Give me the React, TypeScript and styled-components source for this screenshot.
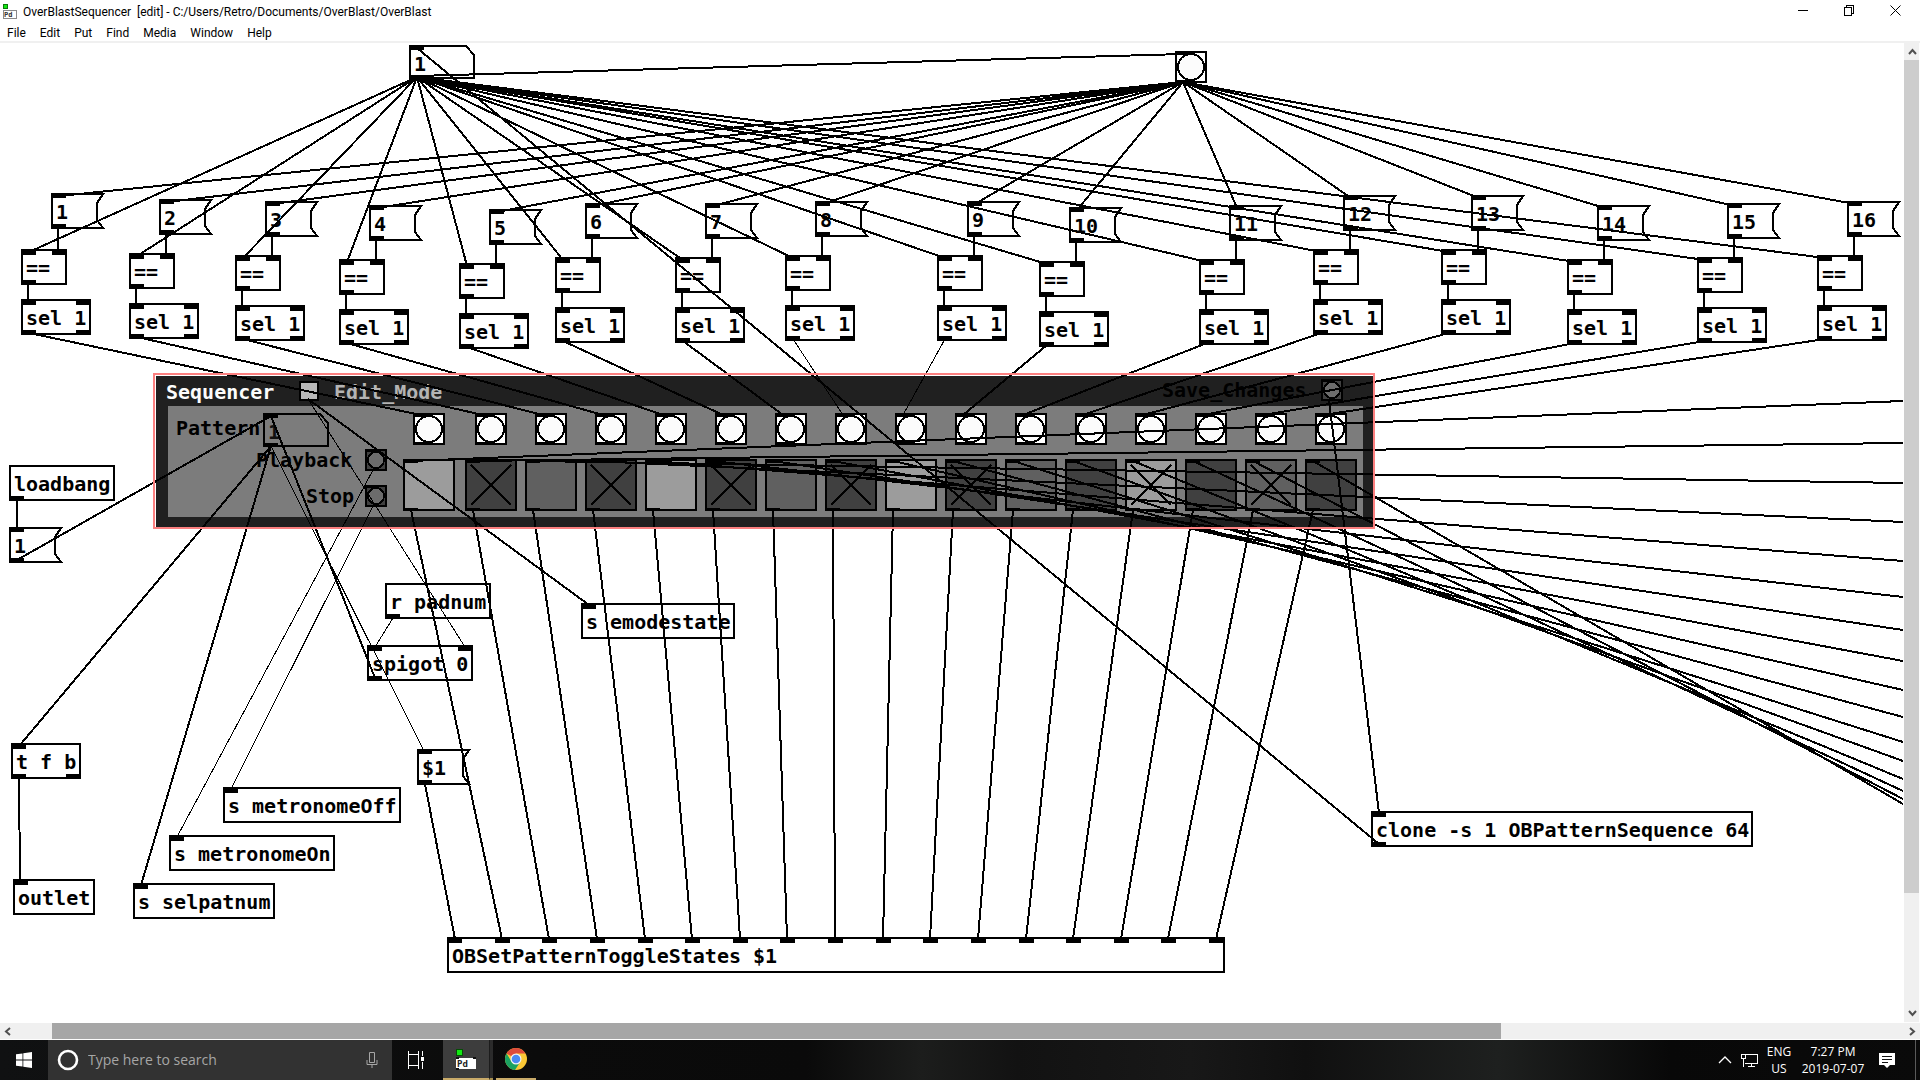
import React from "react";
import styled, { createGlobalStyle } from "styled-components";

const GlobalStyle = createGlobalStyle`
  *, *::before, *::after { box-sizing: border-box; }
  html, body { margin: 0; padding: 0; background: #fff; }
  button, input { margin: 0; padding: 0; border: 0; border-radius: 0; font: inherit; color: inherit; background: none; }
  svg { display: block; }
`;

const UI_FONT = `"Open Sans", "Noto Sans", sans-serif`;
const CHROME_FONT = `Roboto, "Open Sans", sans-serif`;
const PATCH_FONT = `"DejaVu Sans Mono", monospace`;

/* ---------- window frame ---------- */

const Screen = styled.div`
  display: flex;
  flex-direction: column;
  height: 100vh;
  overflow: hidden;
  font-family: ${UI_FONT};
  color: #000;
`;

const TitleBar = styled.header`
  display: flex;
  align-items: center;
  flex: none;
  height: 24px;
  padding: 0 2px 0 3px;
  font-family: ${CHROME_FONT};
`;

const Title = styled.h1`
  flex: 1;
  margin: 0;
  padding-left: 5px;
  font-size: 12px;
  font-weight: 400;
  line-height: 20px;
  white-space: nowrap;
`;

const WindowButton = styled.button`
  display: flex;
  align-items: center;
  align-self: flex-start;
  justify-content: center;
  width: 46px;
  height: 21px;
`;

const MenuBar = styled.nav`
  display: flex;
  flex: none;
  height: 19px;
  border-bottom: 2px solid #f0f0f0;
  font-family: ${CHROME_FONT};
`;

const MenuButton = styled.button`
  padding: 1px 7px 0;
  font-size: 12px;
  line-height: 16px;
`;

const Workspace = styled.main`
  display: grid;
  flex: 1;
  min-height: 0;
  grid-template-columns: minmax(0, 1fr) 16px;
  grid-template-rows: minmax(0, 1fr) 17px;
`;

const Viewport = styled.section`
  position: relative;
  overflow: hidden;
  background: #fff;
`;

const Patch = styled.div`
  position: absolute;
  top: -43px;
  left: 0;
  width: 1903px;
  height: 1024px;
  font-family: ${PATCH_FONT};
  font-size: 20px;
  font-weight: 700;
`;

const ScrollBar = styled.div<{ $vertical?: boolean }>`
  display: flex;
  flex-direction: ${(p) => (p.$vertical ? "column" : "row")};
  grid-column: ${(p) => (p.$vertical ? "auto" : "1 / -1")};
  background: #f0f0f0;
  border: 0 solid #fdfdfd;
  border-width: ${(p) => (p.$vertical ? "0 1px 1px 0" : "0 0 1px 0")};
`;

const ScrollArrow = styled.button`
  display: flex;
  flex: none;
  align-items: center;
  justify-content: center;
  width: 17px;
  height: 17px;
`;

const ScrollTrack = styled.div<{ $vertical?: boolean }>`
  display: flex;
  flex: 1;
  flex-direction: ${(p) => (p.$vertical ? "column" : "row")};
`;

const ScrollSpace = styled.div<{ $grow: number }>`
  flex: ${(p) => p.$grow} 1 0;
`;

const ScrollThumb = styled(ScrollSpace)<{ $color: string }>`
  background: ${(p) => p.$color};
`;

/* ---------- patch objects ---------- */

type Place = { $x: number; $y: number; $w: number };

const ObjectBox = styled.div<Place>`
  position: absolute;
  left: ${(p) => p.$x}px;
  top: ${(p) => p.$y}px;
  width: ${(p) => p.$w}px;
  height: 36px;
  padding: 1px 0 0 3px;
  border: 2px solid #000;
  background: #fff;
  line-height: 32px;
  white-space: nowrap;
`;

const MessageButton = styled.button<Place>`
  position: absolute;
  z-index: 0;
  left: ${(p) => p.$x}px;
  top: ${(p) => p.$y}px;
  width: ${(p) => p.$w}px;
  height: 36px;
  padding: 1px 0 0 5px;
  line-height: 34px;
  text-align: left;
`;

const Outline = styled.svg`
  position: absolute;
  inset: 0;
  z-index: -1;
`;

const NumberField = styled.div<Place & { $color: string }>`
  position: absolute;
  z-index: 0;
  left: ${(p) => p.$x}px;
  top: ${(p) => p.$y}px;
  width: ${(p) => p.$w}px;
  height: 34px;
  color: ${(p) => p.$color};
`;

const NumberInput = styled.input`
  width: 56px;
  height: 34px;
  padding: 3px 0 0 5px;
  outline: none;
`;

const Panel = styled.section`
  position: absolute;
  left: 156px;
  top: 376px;
  width: 1217px;
  height: 151px;
  border: solid #202020;
  border-width: 30px 10px 10px 12px;
  background: #7c7c7c;
`;

const PanelFrame = styled.div`
  position: absolute;
  left: 153px;
  top: 373px;
  width: 1222px;
  height: 156px;
  border: 2px solid #fc8080;
  pointer-events: none;
`;

const PanelText = styled.span<{ $x: number; $y: number; $color: string }>`
  position: absolute;
  left: ${(p) => p.$x}px;
  top: ${(p) => p.$y}px;
  line-height: 24px;
  color: ${(p) => p.$color};
`;

const BangButton = styled.button<{ $x: number; $y: number; $size: number; $bg: string }>`
  position: absolute;
  left: ${(p) => p.$x}px;
  top: ${(p) => p.$y}px;
  width: ${(p) => p.$size}px;
  height: ${(p) => p.$size}px;
  border: 2px solid #000;
  background: ${(p) => p.$bg};
`;

const ToggleBox = styled.span<{ $x: number; $y: number; $size: number; $bg: string }>`
  position: absolute;
  left: ${(p) => p.$x}px;
  top: ${(p) => p.$y}px;
  width: ${(p) => p.$size}px;
  height: ${(p) => p.$size}px;
  border: 2px solid #000;
  background: ${(p) => p.$bg};
`;

const ToggleInput = styled.input`
  position: absolute;
  inset: 0;
  width: 100%;
  height: 100%;
  appearance: none;
`;

const Cords = styled.svg`
  position: absolute;
  inset: 0;
  width: 100%;
  height: 100%;
  pointer-events: none;
`;

/* ---------- patch data ---------- */

const columns: [number, number][] = [
  [21, 249], [129, 253], [235, 255], [339, 259],
  [459, 263], [555, 257], [675, 257], [785, 255],
  [937, 255], [1039, 261], [1199, 259], [1313, 249],
  [1441, 249], [1567, 259], [1697, 257], [1817, 255],
];
const messageTops = [193, 199, 201, 205, 209, 203, 203, 201, 201, 207, 205, 195, 195, 205, 203, 201];

const stepColors = ["#9c9c9c", "#404040", "#606060", "#404040"];
const stepsOn = [2, 4, 6, 8, 10, 13, 15];
const bangX = (n: number) => (n === 0 ? 413 : 415 + 60 * n);
const toggleX = (n: number) => bangX(n) - 10;
const toggleColor = (n: number) => stepColors[n % 4];

const offscreenEnds = [401, 443, 483, 522, 561, 597, 630, 661, 690, 717, 742, 761, 779, 791, 799, 804];

type BoxSpec = { text: string; x: number; y: number; ins?: number[]; outs?: number[]; w?: number };
const stateInlets = Array.from({ length: 17 }, (_, i) => Math.round((i * 762) / 16));

const boxes: BoxSpec[] = [
  { text: "loadbang", x: 9, y: 465, outs: [0] },
  { text: "r padnum", x: 385, y: 583, outs: [0] },
  { text: "spigot 0", x: 367, y: 645, ins: [0, 91], outs: [0] },
  { text: "s emodestate", x: 581, y: 603, ins: [0] },
  { text: "t f b", x: 11, y: 743, ins: [0], outs: [0, 55] },
  { text: "outlet", x: 13, y: 879, ins: [0] },
  { text: "s metronomeOff", x: 223, y: 787, ins: [0] },
  { text: "s metronomeOn", x: 169, y: 835, ins: [0] },
  { text: "s selpatnum", x: 133, y: 883, ins: [0] },
  { text: "clone -s 1 OBPatternSequence 64", x: 1371, y: 811, ins: [0], outs: [0] },
  { text: "OBSetPatternToggleStates $1", x: 447, y: 937, ins: stateInlets, w: 778 },
];
columns.forEach(([x, y]) => {
  boxes.push({ text: "==", x, y, ins: [0, 31], outs: [0], w: 46 });
  boxes.push({ text: "sel 1", x, y: y + 50, ins: [0, 55], outs: [0, 55] });
});

const messages = [
  ...columns.map(([x], i) => ({ text: String(i + 1), x: x + 30, y: messageTops[i] })),
  { text: "1", x: 9, y: 527 },
  { text: "$1", x: 417, y: 749 },
];

/* x1, y1, x2, y2, stroke width */
type Cord = [number, number, number, number, number?];
const cords: Cord[] = [
  [417, 76, 1183, 54],
  [1379, 844, 417, 48],
  [17, 500, 17, 528],
  [17, 560, 271, 416],
  [375, 678, 271, 416],
  [271, 446, 20, 745],
  [271, 446, 141, 885],
  [271, 446, 424, 751, 1],
  [308, 399, 589, 605],
  [308, 399, 465, 647, 1],
  [373, 470, 177, 837, 1],
  [373, 506, 231, 789, 1],
  [393, 618, 375, 647, 1],
  [19, 778, 20, 881],
  [425, 784, 455, 939],
  [1329, 400, 1379, 813],
];
columns.forEach(([x, y], i) => {
  const steep = i === 7 || i === 8;
  cords.push([417, 77, x + 8, y + 3]);
  cords.push([1183, 82, x + 38, messageTops[i] + 3]);
  cords.push([x + 37, messageTops[i] + 35, x + 37, y + 2]);
  cords.push([x + 7, y + 35, x + 7, y + 52]);
  cords.push([x + 8, y + 84, bangX(i) + 8, 415, steep ? 1 : 2]);
  cords.push([toggleX(i) + 8, 461, 1903, offscreenEnds[i]]);
  cords.push([toggleX(i) + 8, 510, 447 + stateInlets[i + 1] + 7, 939]);
});

/* ---------- patch parts ---------- */

function PatchBox({ text, x, y, w }: BoxSpec) {
  return (
    <ObjectBox $x={x} $y={y} $w={w ?? text.length * 12 + 10}>
      {text}
    </ObjectBox>
  );
}

function Message({ text, x, y }: { text: string; x: number; y: number }) {
  return (
    <MessageButton $x={x} $y={y} $w={54}>
      <Outline width="54" height="36" shapeRendering="crispEdges">
        <path d="M1 1H52L46 10V27L52 35H1Z" fill="#fff" stroke="#000" strokeWidth="2" />
        <path d="M0 0H15V5H0ZM0 31H15V36H0Z" />
      </Outline>
      {text}
    </MessageButton>
  );
}

function NumberBox({ x, y, label, fill, color }: { x: number; y: number; label: string; fill: string; color: string }) {
  return (
    <NumberField $x={x} $y={y} $w={66} $color={color}>
      <Outline width="66" height="34" shapeRendering="crispEdges">
        <path d="M1 1H57L65 10V33H1Z" fill={fill} stroke="#000" strokeWidth="2" />
        <path d="M0 0H15V5H0ZM0 30H15V34H0Z" fill="#000" />
      </Outline>
      <NumberInput aria-label={label} defaultValue="1" />
    </NumberField>
  );
}

function Bang({ x, y, size, bg, fill, label }: { x: number; y: number; size: number; bg: string; fill: string; label: string }) {
  const inner = size - 4;
  return (
    <BangButton $x={x} $y={y} $size={size} $bg={bg} aria-label={label}>
      <svg width={inner} height={inner} shapeRendering="crispEdges">
        <circle cx={inner / 2} cy={inner / 2} r={inner / 2 - 1} fill={fill} stroke="#000" strokeWidth="2" />
        <path d={size > 30 ? `M0 0H13V2H0ZM0 ${inner - 1}H13V${inner}H0Z` : `M0 0H9V1H0Z`} />
      </svg>
    </BangButton>
  );
}

function Toggle({ x, y, size, bg, on, label }: { x: number; y: number; size: number; bg: string; on?: boolean; label: string }) {
  const inner = size - 4;
  return (
    <ToggleBox $x={x} $y={y} $size={size} $bg={bg}>
      <ToggleInput type="checkbox" aria-label={label} defaultChecked={on} />
      {size > 30 && (
        <svg width={inner} height={inner} shapeRendering="crispEdges">
          <path d={`M0 0H13V2H0ZM0 ${inner - 1}H13V${inner}H0Z`} />
          {on && <path d={`M4 4L${inner - 4} ${inner - 4}M${inner - 4} 4L4 ${inner - 4}`} stroke="#000" strokeWidth="2" />}
        </svg>
      )}
    </ToggleBox>
  );
}

function SequencerPatch() {
  return (
    <Patch>
      {boxes.map((b, i) => (
        <PatchBox key={i} {...b} />
      ))}
      {messages.map((m, i) => (
        <Message key={i} {...m} />
      ))}
      <NumberBox x={409} y={45} label="Selected pattern" fill="#fff" color="#000" />
      <Bang x={1175} y={51} size={32} bg="#fff" fill="#fcfcfc" label="Refresh" />

      <Panel aria-label="Sequencer" />
      <PanelText $x={166} $y={380} $color="#fcfcfc">Sequencer</PanelText>
      <PanelText $x={334} $y={380} $color="#b4b4b4">Edit_Mode</PanelText>
      <PanelText $x={176} $y={416} $color="#000">Pattern</PanelText>
      <PanelText $x={256} $y={448} $color="#000">Playback</PanelText>
      <PanelText $x={306} $y={484} $color="#000">Stop</PanelText>
      <PanelText $x={1162} $y={378} $color="#000">Save_Changes</PanelText>
      <Toggle x={299} y={381} size={20} bg="#b8b8b8" label="Edit mode" />
      <NumberBox x={263} y={413} label="Pattern" fill="#7c7c7c" color="#101010" />
      <Bang x={365} y={449} size={22} bg="#404040" fill="#6c6c6c" label="Playback" />
      <Bang x={365} y={485} size={22} bg="#404040" fill="#6c6c6c" label="Stop" />
      <Bang x={1321} y={379} size={22} bg="#404040" fill="#6c6c6c" label="Save changes" />
      {columns.map((_, i) => (
        <React.Fragment key={i}>
          <Bang x={bangX(i)} y={413} size={32} bg="#fff" fill="#fcfcfc" label={`Step ${i + 1} bang`} />
          <Toggle x={toggleX(i)} y={459} size={52} bg={toggleColor(i)} on={stepsOn.includes(i + 1)} label={`Step ${i + 1}`} />
        </React.Fragment>
      ))}

      <Cords shapeRendering="crispEdges">
        {boxes.map((b) => [
          ...(b.ins ?? []).map((dx) => <rect key={`i${b.x}-${b.y}-${dx}`} x={b.x + dx} y={b.y} width="15" height="6" />),
          ...(b.outs ?? []).map((dx) => <rect key={`o${b.x}-${b.y}-${dx}`} x={b.x + dx} y={b.y + 31} width="15" height="5" />),
        ])}
        {cords.map(([x1, y1, x2, y2, w = 2], i) => (
          <line key={i} x1={x1} y1={y1} x2={x2} y2={y2} stroke="#000" strokeWidth={w} />
        ))}
      </Cords>
      <PanelFrame />
    </Patch>
  );
}

/* ---------- taskbar ---------- */

const TaskBar = styled.footer`
  display: flex;
  flex: none;
  height: 40px;
  background: linear-gradient(90deg, #101112 0, #0b0b0b 28%, #0a0a0a 42%, #1c1d1c 48%, #121212 53%, #181818 62%, #101010 68%, #1e201f 78%, #080808 87%, #0a0a0a 100%);
  color: #fff;
`;

const TaskButton = styled.button<{ $w: number; $active?: boolean; $line?: boolean }>`
  display: flex;
  align-items: center;
  justify-content: center;
  width: ${(p) => p.$w}px;
  height: 40px;
  background: ${(p) => (p.$active ? "#3d3d3d" : "transparent")};
  border-bottom: ${(p) => (p.$line ? "2px solid #c9ab69" : "0")};
`;

const AppSlot = styled.div`
  display: flex;
  padding: 0 3px;
`;

const Divider = styled.span`
  width: 3px;
`;

const ButtonEdge = styled.span`
  width: 4px;
  background: #2b2b2b;
  border-left: 1px solid #1c1c1c;
  border-bottom: 2px solid #a8904f;
`;

const SearchBox = styled.label`
  display: flex;
  align-items: center;
  width: 344px;
  padding: 0 14px 0 9px;
  background: #323232;
`;

const SearchInput = styled.input`
  flex: 1;
  min-width: 0;
  padding-left: 9px;
  outline: none;
  font-size: 14px;
  line-height: 20px;
  &::placeholder { color: #a6a6a6; opacity: 1; }
`;

const Spacer = styled.div`
  flex: 1;
`;

const TrayButton = styled.button<{ $w: number }>`
  display: flex;
  flex-direction: column;
  align-items: center;
  justify-content: center;
  width: ${(p) => p.$w}px;
  font-size: 12px;
  line-height: 17px;
  white-space: nowrap;
`;

const DesktopEdge = styled.button`
  width: 5px;
  margin-left: 10px;
  border-left: 1px solid #5a5a5a;
`;

function PdIcon() {
  return (
    <svg width="20" height="22" viewBox="0 0 20 22" shapeRendering="crispEdges">
      <rect x="0" y="1" width="7" height="7" fill="#064d06" />
      <rect x="1" y="2" width="5" height="5" fill="#12e812" />
      <rect x="0" y="10" width="20" height="11" fill="#fff" />
      <path d="M0 9H3V11H0ZM17 9H20V11H17ZM0 20H3V22H0Z" fill="#111" />
      <text x="1" y="19" fontFamily="DejaVu Sans Mono" fontSize="9" fontWeight="700" fill="#222">Pd</text>
    </svg>
  );
}

function ChromeIcon() {
  return (
    <svg width="24" height="24" viewBox="0 0 24 24">
      <circle cx="12" cy="12" r="11" fill="#fbc835" />
      <path d="M12 12L2.5 6.5A11 11 0 0 1 21.5 6.5H12Z" fill="#de4b3b" />
      <path d="M2.5 6.5A11 11 0 0 0 11 23L16.5 14.5L12 12L7.5 14.5Z" fill="#1aa261" />
      <circle cx="12" cy="12" r="5.5" fill="#f4f4f4" />
      <circle cx="12" cy="12" r="4.3" fill="#4a8af4" />
    </svg>
  );
}

function Taskbar() {
  return (
    <TaskBar>
      <TaskButton $w={48} aria-label="Start">
        <svg width="16" height="16" viewBox="0 0 16 16" fill="#fff">
          <path d="M0 2.3L6.5 1.4V7.6H0ZM7.3 1.3L16 0V7.6H7.3ZM0 8.4H6.5V14.6L0 13.7ZM7.3 8.4H16V16L7.3 14.7Z" />
        </svg>
      </TaskButton>
      <SearchBox>
        <svg width="22" height="22" viewBox="0 0 22 22">
          <circle cx="11" cy="11" r="9" fill="none" stroke="#fff" strokeWidth="2.6" />
        </svg>
        <SearchInput aria-label="Search" placeholder="Type here to search" />
        <svg width="12" height="18" viewBox="0 0 12 18" fill="none" stroke="#a6a6a6">
          <path d="M3.5 1.5H8.5V11.5H3.5ZM1 9V13.5H11V9M6 13.5V17" />
        </svg>
      </SearchBox>
      <TaskButton $w={48} aria-label="Task view">
        <svg width="18" height="18" viewBox="0 0 18 18" fill="none" stroke="#fff" shapeRendering="crispEdges">
          <path d="M1.5 0V3.5H11.5V0M1.5 18V14.5H11.5V18M1.5 3.5V14.5M11.5 3.5V14.5M15.5 0V5M15.5 11V18" />
          <rect x="14" y="6" width="3" height="4" fill="#fff" stroke="none" />
        </svg>
      </TaskButton>
      <Divider />
      <TaskButton $w={46} $active $line aria-label="Pd">
        <PdIcon />
      </TaskButton>
      <ButtonEdge />
      <AppSlot>
        <TaskButton $w={40} $line aria-label="Chrome">
          <ChromeIcon />
        </TaskButton>
      </AppSlot>
      <Spacer />
      <TrayButton $w={24} aria-label="Show hidden icons">
        <svg width="14" height="8" viewBox="0 0 14 8" fill="none" stroke="#fff" strokeWidth="1.3">
          <path d="M1 7L7 1L13 7" />
        </svg>
      </TrayButton>
      <TrayButton $w={24} aria-label="Network">
        <svg width="17" height="15" viewBox="0 0 17 15" fill="none" stroke="#fff" shapeRendering="crispEdges">
          <path d="M5 1.5H16.5V10.5H4M10.5 10.5V13M7 13.5H14M0.5 1.5H4.5V5.5H0.5ZM2.5 5.5V14" />
        </svg>
      </TrayButton>
      <TrayButton $w={36}>
        <span>ENG</span>
        <span>US</span>
      </TrayButton>
      <TrayButton $w={72}>
        <span>7:27 PM</span>
        <span>2019-07-07</span>
      </TrayButton>
      <TrayButton $w={36} aria-label="Notifications">
        <svg width="16" height="17" viewBox="0 0 16 17">
          <path d="M0 1H16V13H11L8 16L5 13H0Z" fill="#fff" />
          <path d="M3 4.5H13M3 7.5H13M3 10.5H9" stroke="#111" />
        </svg>
      </TrayButton>
      <DesktopEdge aria-label="Show desktop" />
    </TaskBar>
  );
}

/* ---------- scroll bars ---------- */

function Chevron({ d }: { d: string }) {
  return (
    <svg width="9" height="9" viewBox="0 0 9 9" fill="none" stroke="#505050" strokeWidth="2">
      <path d={d} />
    </svg>
  );
}

export default function App() {
  return (
    <Screen>
      <GlobalStyle />
      <TitleBar>
        <svg width="15" height="18" viewBox="0 0 15 18" shapeRendering="crispEdges">
          <rect x="0" y="1" width="5" height="5" fill="#0a7a0a" />
          <rect x="1" y="2" width="3" height="3" fill="#12e812" />
          <rect x="0.5" y="7.5" width="13" height="8" fill="#fff" stroke="#8a8a8a" />
          <text x="1" y="14" fontFamily="DejaVu Sans Mono" fontSize="7" fontWeight="700" fill="#333">Pd</text>
        </svg>
        <Title>{"OverBlastSequencer \u00a0[edit] - C:/Users/Retro/Documents/OverBlast/OverBlast"}</Title>
        <WindowButton aria-label="Minimize">
          <svg width="11" height="11" stroke="#000" shapeRendering="crispEdges"><path d="M0 5.5H10" /></svg>
        </WindowButton>
        <WindowButton aria-label="Restore">
          <svg width="11" height="11" fill="none" stroke="#000" shapeRendering="crispEdges">
            <path d="M0.5 2.5H7.5V10.5H0.5ZM2.5 2V0.5H9.5V8.5H8" />
          </svg>
        </WindowButton>
        <WindowButton aria-label="Close">
          <svg width="11" height="11" stroke="#000"><path d="M0.5 0.5L10.5 10.5M10.5 0.5L0.5 10.5" /></svg>
        </WindowButton>
      </TitleBar>
      <MenuBar>
        {["File", "Edit", "Put", "Find", "Media", "Window", "Help"].map((m) => (
          <MenuButton key={m}>{m}</MenuButton>
        ))}
      </MenuBar>
      <Workspace>
        <Viewport>
          <SequencerPatch />
        </Viewport>
        <ScrollBar $vertical>
          <ScrollArrow aria-label="Scroll up"><Chevron d="M1 7L4.5 3L8 7" /></ScrollArrow>
          <ScrollTrack $vertical>
            <ScrollThumb $grow={834} $color="#cdcdcd" />
            <ScrollSpace $grow={112} />
          </ScrollTrack>
          <ScrollArrow aria-label="Scroll down"><Chevron d="M1 2L4.5 6L8 2" /></ScrollArrow>
        </ScrollBar>
        <ScrollBar>
          <ScrollArrow aria-label="Scroll left"><Chevron d="M6 1L2 4.5L6 8" /></ScrollArrow>
          <ScrollTrack>
            <ScrollSpace $grow={35} />
            <ScrollThumb $grow={1449} $color="#a6a6a6" />
            <ScrollSpace $grow={402} />
          </ScrollTrack>
          <ScrollArrow aria-label="Scroll right"><Chevron d="M3 1L7 4.5L3 8" /></ScrollArrow>
        </ScrollBar>
      </Workspace>
      <Taskbar />
    </Screen>
  );
}
